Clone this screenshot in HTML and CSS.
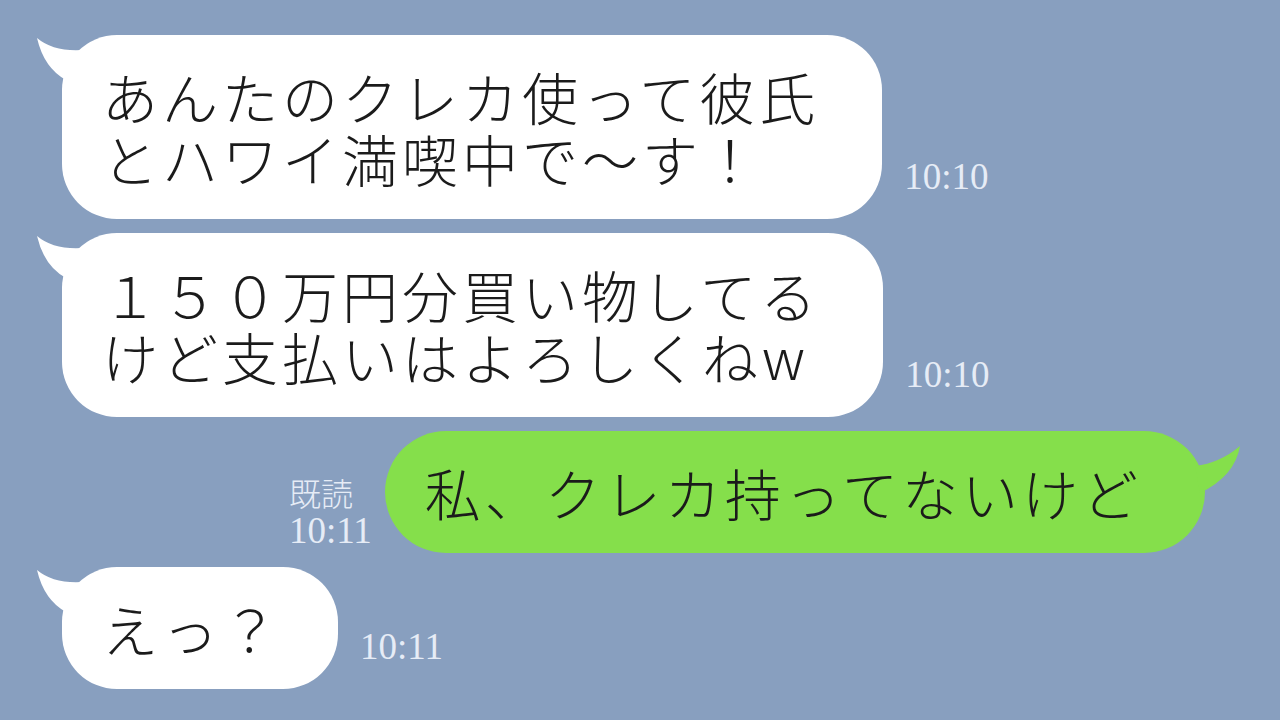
FILE: index.html
```html
<!DOCTYPE html>
<html lang="ja">
<head>
<meta charset="utf-8">
<title>LINE chat</title>
<link rel="stylesheet" href="styles.css">
</head>
<body>
<main class="chat">
  <div class="row row-in">
    <div class="bubble bubble-in">
      <svg class="tail tail-in" viewBox="0 0 70 60" aria-hidden="true"><path d="M5 3 Q24 19 60 14 L34 45 Q12 33 5 3 Z"/></svg>
      <p class="text"><span class="line">あんたのクレカ使って彼氏</span><span class="line">とハワイ満喫中で〜す！</span></p>
    </div>
    <span class="time">10:10</span>
  </div>
  <div class="row row-in">
    <div class="bubble bubble-in">
      <svg class="tail tail-in" viewBox="0 0 70 60" aria-hidden="true"><path d="M5 3 Q24 19 60 14 L34 45 Q12 33 5 3 Z"/></svg>
      <p class="text"><span class="line">１５０万円分買い物してる</span><span class="line">けど支払いはよろしくねw</span></p>
    </div>
    <span class="time">10:10</span>
  </div>
  <div class="row row-out">
    <div class="meta">
      <span class="read">既読</span>
      <span class="time time-out">10:11</span>
    </div>
    <div class="bubble bubble-out">
      <svg class="tail tail-out" viewBox="0 0 80 70" aria-hidden="true"><path d="M75 15 Q55 32 30 35 L35 62 Q70 45 75 15 Z"/></svg>
      <p class="text"><span class="line">私、クレカ持ってないけど</span></p>
    </div>
  </div>
  <div class="row row-in">
    <div class="bubble bubble-in bubble-short">
      <svg class="tail tail-in" viewBox="0 0 70 60" aria-hidden="true"><path d="M5 3 Q24 19 60 14 L34 45 Q12 33 5 3 Z"/></svg>
      <p class="text"><span class="line">えっ？</span></p>
    </div>
    <span class="time">10:11</span>
  </div>
</main>
</body>
</html>
```
FILE: styles.css
```css
html, body {
  margin: 0;
  padding: 0;
}
body {
  width: 1280px;
  height: 720px;
  overflow: hidden;
  background: #889fbf;
  font-family: "Noto Sans CJK JP", "Noto Sans", sans-serif;
}
.chat {
  display: flex;
  flex-direction: column;
  gap: 14px;
  padding-top: 35px;
}
.row {
  display: flex;
  align-items: flex-end;
}
.row-in {
  padding-left: 62px;
}
.row-out {
  justify-content: flex-end;
  padding-right: 75px;
}
.bubble {
  position: relative;
  padding: 30px 63px 30px 40px;
  border-radius: 55px;
}
.bubble-in {
  background: #ffffff;
}
.bubble-short {
  padding-right: 56px;
}
.bubble-out {
  background: #85df4b;
  border-radius: 61px;
  padding-left: 40px;
  padding-right: 63px;
}
.text {
  margin: 0;
  font-size: 56px;
  line-height: 62px;
  letter-spacing: 4px;
  font-weight: 300;
  color: #1b1b1b;
  white-space: nowrap;
}
.line {
  display: block;
  height: 62px;
}
.tail {
  position: absolute;
  top: 0;
}
.tail-in {
  left: -30px;
  width: 70px;
  height: 60px;
  fill: #ffffff;
}
.tail-out {
  right: -40px;
  width: 80px;
  height: 70px;
  fill: #85df4b;
}
.time {
  font-family: "Liberation Serif", serif;
  font-size: 37px;
  line-height: 37px;
  color: #e6ecf6;
  margin-left: 22px;
  margin-bottom: 24px;
}
.meta {
  display: flex;
  flex-direction: column;
  align-items: flex-start;
  margin-right: 13px;
  margin-bottom: 4px;
}
.read {
  font-size: 32px;
  line-height: 40px;
  font-weight: 300;
  color: #e6ecf6;
}
.time-out {
  margin: 0;
}
```
